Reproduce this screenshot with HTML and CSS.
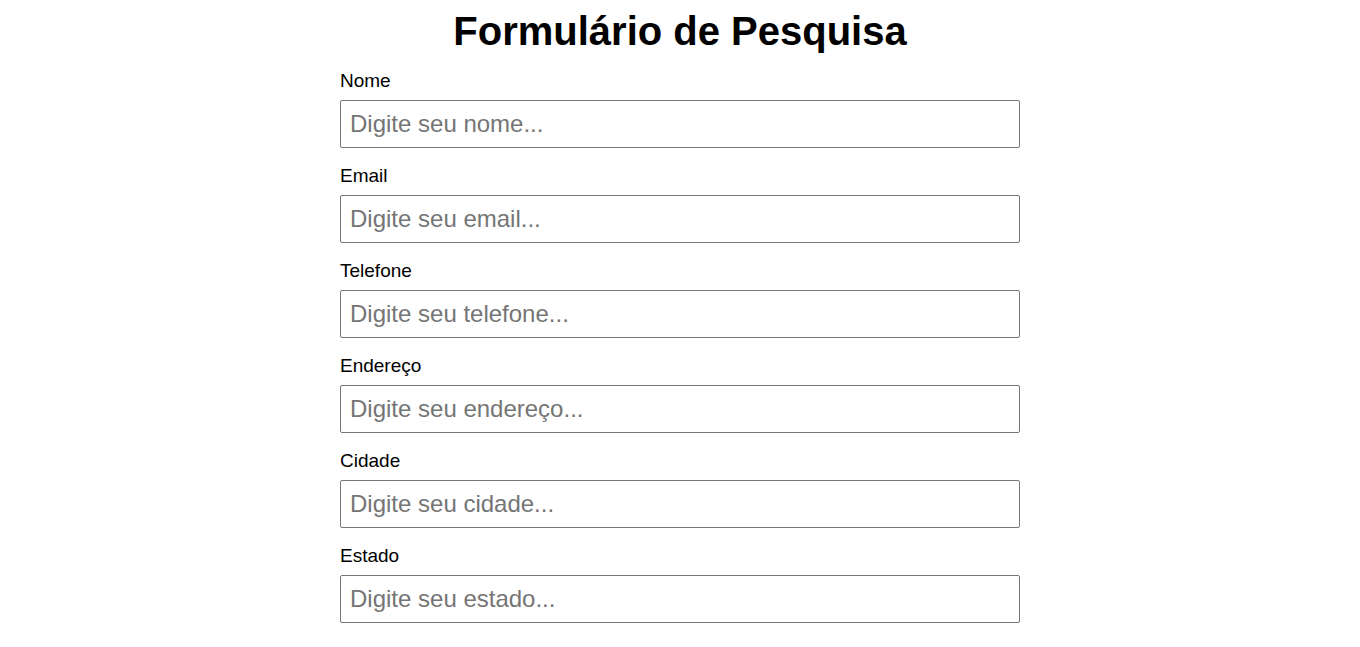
FILE: index.html
```html
<!DOCTYPE html>
<html lang="pt">
<head>
<meta charset="utf-8">
<title>Formulário de Pesquisa</title>
<link rel="stylesheet" href="styles.css">
</head>
<body>
<h1 class="title">Formulário de Pesquisa</h1>
<form class="form">
  <div class="field">
    <label class="label" for="nome">Nome</label>
    <input class="input" id="nome" type="text" placeholder="Digite seu nome...">
  </div>
  <div class="field">
    <label class="label" for="email">Email</label>
    <input class="input" id="email" type="text" placeholder="Digite seu email...">
  </div>
  <div class="field">
    <label class="label" for="telefone">Telefone</label>
    <input class="input" id="telefone" type="text" placeholder="Digite seu telefone...">
  </div>
  <div class="field">
    <label class="label" for="endereco">Endereço</label>
    <input class="input" id="endereco" type="text" placeholder="Digite seu endereço...">
  </div>
  <div class="field">
    <label class="label" for="cidade">Cidade</label>
    <input class="input" id="cidade" type="text" placeholder="Digite seu cidade...">
  </div>
  <div class="field">
    <label class="label" for="estado">Estado</label>
    <input class="input" id="estado" type="text" placeholder="Digite seu estado...">
  </div>
</form>
</body>
</html>
```
FILE: styles.css
```css
body {
  margin: 8px;
  font-family: "Liberation Sans", Arial, sans-serif;
  color: #000;
  background: #fff;
}
.title {
  margin: 0;
  font-size: 40px;
  font-weight: bold;
  text-align: center;
  line-height: 46px;
}
.form {
  width: 680px;
  margin: 16px auto 0;
  display: flex;
  flex-direction: column;
  gap: 17px;
}
.field {
  display: flex;
  flex-direction: column;
  gap: 8px;
}
.label {
  font-size: 19px;
  line-height: 22px;
}
.input {
  box-sizing: border-box;
  width: 100%;
  height: 48px;
  margin: 0;
  padding: 0 9px;
  border: 1px solid #767676;
  border-radius: 2px;
  font-family: "Liberation Sans", Arial, sans-serif;
  font-size: 24px;
  color: #000;
  background: #fff;
}
.input::placeholder {
  color: #757575;
}
```
